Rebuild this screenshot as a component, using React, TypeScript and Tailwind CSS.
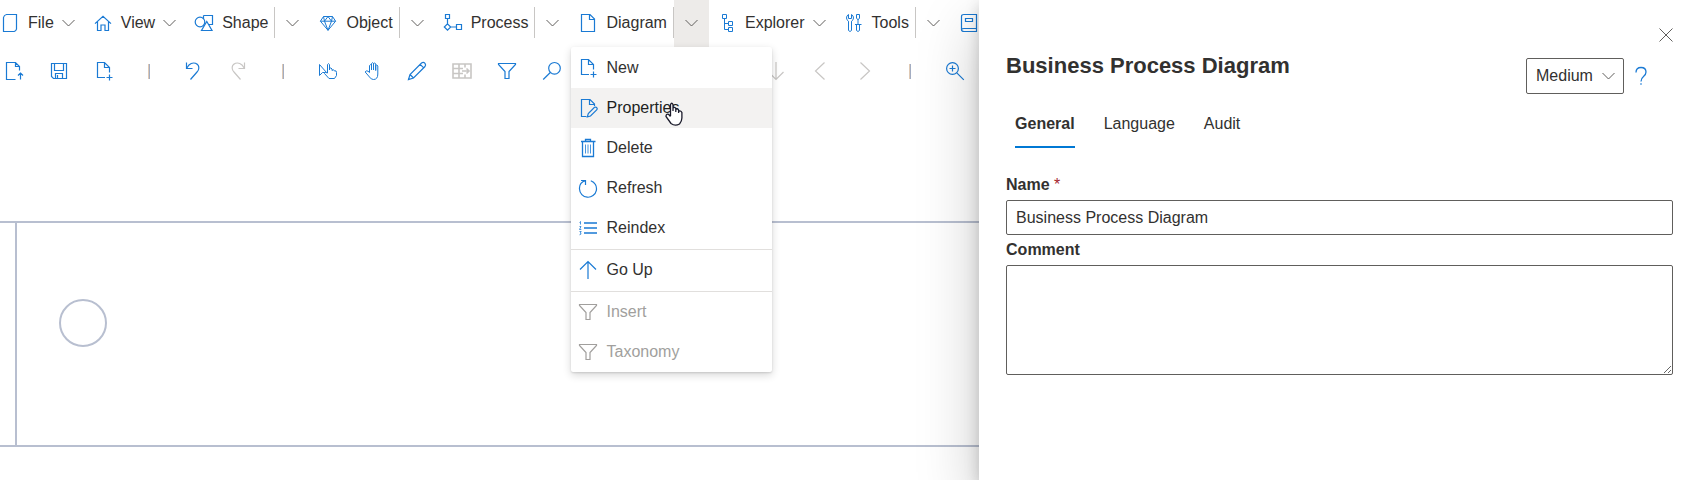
import { useState } from "react";
import type { ReactNode } from "react";

const BLUE = "text-[#1a7ad4]";

function Svg({ children }: { children: ReactNode }) {
  return (
    <svg viewBox="0 0 20 20" className="size-5 shrink-0" fill="none" stroke="currentColor" strokeWidth="1.2" aria-hidden="true">
      {children}
    </svg>
  );
}

const icons = {
  file: <path d="M6.5 1.5H16.5V16.2Q16 18 14.2 18.5H3.5V4.5Q4 2 6.5 1.5Z" />,
  home: <path d="M2 10.6L10 3.2L18 10.6M4.5 8.5V17.5H8V12H12V17.5H15.500V8.500" />,
  shapes: (
    <>
      <circle cx="6" cy="9" r="4.800" />
      <path d="M9.500 2.500H18.500V11.500H15M9.500 2.500V6" />
      <path d="M12.800 8.500L18 17.500H7.500Z" fill="white" />
    </>
  ),
  diamond: <path strokeWidth="1" d="M5.500 3.500H14.500L17.600 8.200L10 17.300L2.400 8.200ZM2.400 8.200H17.600M6.500 8.200L10 17.300L13.500 8.200L10 3.500L6.500 8.200L5.500 3.500M13.500 8.200L14.500 3.500" />,
  process: <path d="M2.500 1.500H6.500V5.500H2.500ZM4.500 5.500V10.800M4.500 10.800L7.700 14L4.500 17.200L1.300 14ZM7.700 14H13.500M13.500 11.500H18.500V16.500H13.500Z" />,
  page: <path d="M3.500 1.500H12L16.500 6V18.500H3.500ZM11.500 1.500V6.500H16.500" />,
  tree: <path strokeWidth="1" d="M5.500 1.500H9.500V5.500H5.500ZM7.500 5.500V16.500H11.500M7.500 10.500H11.500M11.500 8.500H15.500V12.500H11.500ZM11.500 14.500H15.500V18.500H11.500Z" />,
  tools: (
    <path
      strokeWidth="1"
      d="M4.500 1.500V5.500H7.500V1.500Q9.500 2.500 9.500 5Q9.500 7 7.500 8.200V17.500Q6 19.500 4.500 17.500V8.200Q2.500 7 2.500 5Q2.500 2.500 4.500 1.500ZM12.500 1.500H15.500V5L14.500 6.500H13.500L12.500 5ZM14 6.500V11.500M11 11.500H17.500M12.500 11.500V17.500Q14 19.500 15.500 17.500V11.500"
    />
  ),
  book: <path d="M5 1.500H17.500V18.500H5Q2.500 18.500 2.500 16.500V3.500Q2.500 1.500 5 1.500ZM2.500 16.500Q3 15.500 5 15.500H17.500M6.500 5.500H13.500V8.500H6.500Z" />,
  pageUp: <path d="M11.500 18.500H2.500V1.500H11.500L15.500 5.500V9.500M11.500 1.500V5.500H15.500M16.500 18.500V12M14 14.500L16.500 12L19 14.500" />,
  save: <path d="M2.500 2.500H17.500V17.500H4.500L2.500 15.500ZM5.500 2.500V9.500H14.500V2.500M6.500 17.500V12.500H13.500V17.500M8.500 14V17.500" />,
  pageAdd: <path d="M11 16.500H3.500V1.500H10.500L15.500 6.500V11.500M10.500 1.500V6.500H15.500M15.500 13.500V19.500M12.500 16.500H18.500" />,
  undo: <path d="M3.500 1.500V7.500H9.500M3.500 7.500L6 4Q9 1.200 12.500 2.300Q16.500 4 15.700 8Q15.300 9.800 14 11L7.500 18.500" />,
  redo: <path d="M16.500 1.500V7.500H10.500M16.500 7.500L14 4Q11 1.200 7.500 2.300Q3.500 4 4.300 8Q4.700 9.800 6 11L12.500 18.500" />,
  touch: (
    <>
      <path strokeWidth="1" d="M1.500 3.500V14.500L4.500 11.500L8.500 11.500Z" />
      <path strokeWidth="1" d="M9.500 12V3.500Q10.500 1.800 11.500 3.500V9V7.500Q13 6 14 8V9.500Q15.500 7.500 16.500 10Q18.500 9 18.500 11.500V14.500L16.500 17.500H11L6.500 12.500Q7 10.500 9.500 12" fill="white" />
    </>
  ),
  hand: (
    <path strokeWidth="1" d="M6.500 11.500V4.500Q7.500 2.800 8.500 4.500V9V2.500Q9.500 0.800 10.500 2.500V9V2.500Q11.700 1 12.700 3V9.500V4.500Q13.800 3 14.800 5V13Q14.800 18.500 10.500 18.500Q8 18.500 6.500 16L2.200 11Q3 9 5 10.200L6.500 11.500" />
  ),
  pencil: <path d="M1.500 18.500L3 13.500L14.500 2Q16.500 0.800 18 2.300Q19.200 4 18 5.500L6.500 17ZM3 13.500L6.500 17M13.200 3.300L16.700 6.800" />,
  table: <path strokeWidth="1.600" d="M1 3H19V17H1ZM1 7.500H11M1 12.500H11M7 3V17M13 3V6.500M13 13.500V17M10 10H17M14.500 7.500L17 10L14.500 12.500" />,
  filter: <path d="M1.500 2.500H18.500V3.500L12 10.500V17.500H8V10.500L1.500 3.500Z" />,
  search: (
    <>
      <circle cx="12.500" cy="7.300" r="5.800" />
      <path d="M8.300 11.500L1.200 18.500" />
    </>
  ),
  down: <path d="M10 1V18.500M2.500 11L10 18.500L17.500 11" />,
  left: <path d="M14.500 1.500L5.500 10L14.500 18.500" />,
  right: <path d="M5.500 1.500L14.500 10L5.500 18.500" />,
  zoomIn: (
    <>
      <circle cx="7.500" cy="7.500" r="5.900" />
      <path d="M11.800 11.800L18.800 18.800M7.500 4.500V10.500M4.500 7.500H10.500" />
    </>
  ),
  pageEdit: (
    <>
      <path d="M8.500 18.500H3.500V1.500H12L16.500 6V8M11.500 1.500V6.500H16.500" />
      <path d="M9.300 18.800L10.300 15.500L16.500 9.300Q18 8.500 19 10Q19.500 11 18.700 11.800L12.500 18Z" />
    </>
  ),
  trash: (
    <>
      <path strokeWidth="1.300" d="M3 3.500H17.500M4.500 3.500V18.500H15.500V3.500M7.500 3.500V1.500H12.500V3.500" />
      <path strokeWidth="1" strokeOpacity="0.800" d="M7.500 6.500V15.500M10 6.500V15.500M12.500 6.500V15.500" />
    </>
  ),
  refresh: <path d="M3 2.500H7.500V7M7.500 2.500C3.500 3.800 1.200 7 1.500 11A8.500 8.500 0 1 0 12.800 2.700" />,
  numbered: (
    <>
      <path d="M6 5H19M6 10H19M6 15H19" strokeWidth="1.400" />
      <path strokeWidth="0.800" d="M1.500 4.500L2.500 3.500V6.500M1.500 8.500H3L1.500 11.500H3.300M1.500 13.500H3.200L2.300 15L3.200 16L1.500 16.800" />
    </>
  ),
  up: <path d="M10 1.500V19M2 9.500L10 1.500L18 9.500" />,
};

type IconName = keyof typeof icons;

function Icon({ name }: { name: IconName }) {
  return <Svg>{icons[name]}</Svg>;
}

function Chevron() {
  return (
    <svg viewBox="0 0 13 8" className="h-2 w-[13px] shrink-0 text-[#605e5c]" fill="none" stroke="currentColor" aria-hidden="true">
      <path d="M0.500 1L6.500 7L12.500 1" />
    </svg>
  );
}

function MenuButton({ icon, label }: { icon: IconName; label: string }) {
  return (
    <button className="flex h-full shrink-0 items-center gap-2 pr-2.5 pb-0.5 pl-2">
      <span className={BLUE}><Icon name={icon} /></span>
      {label}
      <Chevron />
    </button>
  );
}

function SplitButton({ icon, label, open, children }: { icon: IconName; label: string; open?: boolean; children?: ReactNode }) {
  return (
    <div className="relative flex h-full shrink-0">
      <button className="flex h-full items-center gap-2 pr-1.5 pb-0.5 pl-2">
        <span className={BLUE}><Icon name={icon} /></span>
        {label}
      </button>
      <span className="mt-[7px] h-[31px] w-px bg-[#c8c6c4]" />
      <button
        aria-label={label + " menu"}
        aria-expanded={!!open}
        className={open ? "flex h-full w-[35px] items-center justify-center bg-[#edebe9] pb-0.5" : "flex h-full w-[35px] items-center justify-center pb-0.5"}
      >
        <Chevron />
      </button>
      {children}
    </div>
  );
}

function MenuItem({ icon, label, hovered, disabled }: { icon: IconName; label: string; hovered?: boolean; disabled?: boolean }) {
  const tone = disabled ? "text-[#a19f9d]" : hovered ? "bg-[#f3f2f1] text-[#201f1e]" : "text-[#323130]";
  return (
    <button role="menuitem" disabled={disabled} className={"flex h-10 w-full items-center gap-2 pl-[7px] text-left " + tone}>
      <span className={disabled ? "text-[#a19f9d]" : BLUE}><Icon name={icon} /></span>
      {label}
    </button>
  );
}

function DiagramMenu() {
  return (
    <div role="menu" className="absolute top-full left-px z-20 w-[201px] rounded-xs bg-white pt-px shadow-[0_3px_8px_rgba(0,0,0,0.16),0_1px_2px_rgba(0,0,0,0.12)]">
      <MenuItem icon="pageAdd" label="New" />
      <MenuItem icon="pageEdit" label="Properties" hovered />
      <MenuItem icon="trash" label="Delete" />
      <MenuItem icon="refresh" label="Refresh" />
      <MenuItem icon="numbered" label="Reindex" />
      <hr className="mt-px border-[#e1dfdd]" />
      <MenuItem icon="up" label="Go Up" />
      <hr className="mt-px border-[#e1dfdd]" />
      <MenuItem icon="filter" label="Insert" disabled />
      <MenuItem icon="filter" label="Taxonomy" disabled />
      <svg viewBox="0 0 18 24" className="absolute top-[55px] left-[94px] h-6 w-[18px]" fill="white" stroke="#1b1b2b" strokeWidth="1.300" aria-hidden="true">
        <path d="M5.500 14V2.500Q6.700 0 8 2.500V9V6Q9.500 4.600 10.800 6.500V10V7.500Q12.400 6 13.600 8.200V11V9.500Q15.500 8 16.900 10.500V16Q16.800 19.500 14.500 22Q10 24.500 6 21.500L1 14.500Q1 11.500 3.500 12.300L5.500 14.500" />
      </svg>
    </div>
  );
}

function Tool({ icon, label, muted, className = "" }: { icon: IconName; label: string; muted?: boolean; className?: string }) {
  return (
    <button aria-label={label} disabled={muted} className={"flex items-center justify-center " + (muted ? "text-[#c8c6c4] " : BLUE + " ") + className}>
      <Icon name={icon} />
    </button>
  );
}

function ToolDivider() {
  return <span className="h-[15px] w-0.5 place-self-center border-r border-l border-r-[#a3adc2] border-l-[#dfc9b4]" />;
}

function PropertiesPanel() {
  const [tab, setTab] = useState("General");
  return (
    <aside className="relative z-10 w-[42.24%] shrink-0 bg-white pt-7 pr-[22px] pl-[27px] text-[#323130] shadow-[0_26px_58px_rgba(0,0,0,0.22),0_5px_14px_rgba(0,0,0,0.18)]">
      <div className="flex justify-end">
        <button aria-label="Close" className="text-[#605e5c]">
          <svg viewBox="0 0 14 14" className="size-3.5" fill="none" stroke="currentColor" aria-hidden="true">
            <path d="M0.500 0.500L13.500 13.500M13.500 0.500L0.500 13.500" />
          </svg>
        </button>
      </div>
      <header className="mt-2.5 flex items-start">
        <h2 className="grow text-[22px] leading-7 font-bold">Business Process Diagram</h2>
        <div className="mt-1.5 flex items-center gap-[11px] pr-[26px]">
          <div className="relative">
            <select aria-label="Panel size" className="h-9 w-[98px] appearance-none rounded-xs border border-[#605e5c] bg-white pl-[9px] text-base">
              <option>Medium</option>
            </select>
            <span className="pointer-events-none absolute inset-y-0 right-[9px] flex items-center"><Chevron /></span>
          </div>
          <button aria-label="Help" className={BLUE}>
            <svg viewBox="0 0 12 20" className="h-5 w-3" fill="none" stroke="currentColor" strokeWidth="1.300" aria-hidden="true">
              <path d="M1 6.500Q1 1.500 6 1.500Q11 1.500 11 6Q11 8.500 8.500 10.500Q6 12.500 6 15.500M6 17.300V18.700" />
            </svg>
          </button>
        </div>
      </header>
      <div role="tablist" className="mt-2 flex gap-[29px] pl-[9px]">
        {["General", "Language", "Audit"].map((name) => (
          <button
            key={name}
            role="tab"
            aria-selected={tab === name}
            onClick={() => setTab(name)}
            className={tab === name ? "h-[46px] border-b-2 border-[#0078d4] font-bold" : "h-[46px] border-b-2 border-transparent"}
          >
            {name}
          </button>
        ))}
      </div>
      <form className="mt-[22px] flex flex-col">
        <label htmlFor="name" className="h-[30px] leading-[30px] font-bold">
          Name <span className="font-normal text-[#a4262c]">*</span>
        </label>
        <input id="name" defaultValue="Business Process Diagram" className="h-[35px] rounded-xs border border-[#605e5c] px-[9px]" />
        <label htmlFor="comment" className="h-[30px] leading-[30px] font-bold">Comment</label>
        <textarea id="comment" className="h-[110px] rounded-xs border border-[#605e5c] px-[9px] py-1" />
      </form>
    </aside>
  );
}

export default function App() {
  return (
    <div className="flex min-h-screen overflow-hidden bg-white font-['Liberation_Sans',Arial,sans-serif] text-base text-[#323130]">
      <main className="flex min-w-0 flex-1 flex-col overflow-hidden">
        <nav aria-label="Main menu" className="-ml-2 flex h-[47px]">
          <MenuButton icon="file" label="File" />
          <MenuButton icon="home" label="View" />
          <SplitButton icon="shapes" label="Shape" />
          <SplitButton icon="diamond" label="Object" />
          <SplitButton icon="process" label="Process" />
          <SplitButton icon="page" label="Diagram" open>
            <DiagramMenu />
          </SplitButton>
          <MenuButton icon="tree" label="Explorer" />
          <SplitButton icon="tools" label="Tools" />
          <button aria-label="Dictionary" className={"flex h-full shrink-0 items-center px-2 pb-0.5 " + BLUE}>
            <Icon name="book" />
          </button>
        </nav>
        <div role="toolbar" aria-label="Diagram tools" className="mr-0.5 -ml-2 grid h-12 grid-cols-[repeat(22,minmax(0,1fr))]">
          <Tool icon="pageUp" label="Publish" />
          <Tool icon="save" label="Save" />
          <Tool icon="pageAdd" label="New page" />
          <ToolDivider />
          <Tool icon="undo" label="Undo" />
          <Tool icon="redo" label="Redo" muted />
          <ToolDivider />
          <Tool icon="touch" label="Select" />
          <Tool icon="hand" label="Pan" />
          <Tool icon="pencil" label="Draw" />
          <Tool icon="table" label="Insert table" muted />
          <Tool icon="filter" label="Filter" />
          <Tool icon="search" label="Search" />
          <Tool icon="down" label="Move down" muted className="col-start-18" />
          <Tool icon="left" label="Previous" muted />
          <Tool icon="right" label="Next" muted />
          <ToolDivider />
          <Tool icon="zoomIn" label="Zoom in" />
        </div>
        <section aria-label="Diagram canvas" className="mt-[126px] flex h-[226px] border-y-2 border-[#b8bfd0]">
          <div className="w-[17px] border-r-2 border-[#b8bfd0]" />
          <div className="mt-[76px] ml-[42px] size-12 rounded-full border-[2px] border-[#b8bfd0]" />
        </section>
      </main>
      <PropertiesPanel />
    </div>
  );
}
